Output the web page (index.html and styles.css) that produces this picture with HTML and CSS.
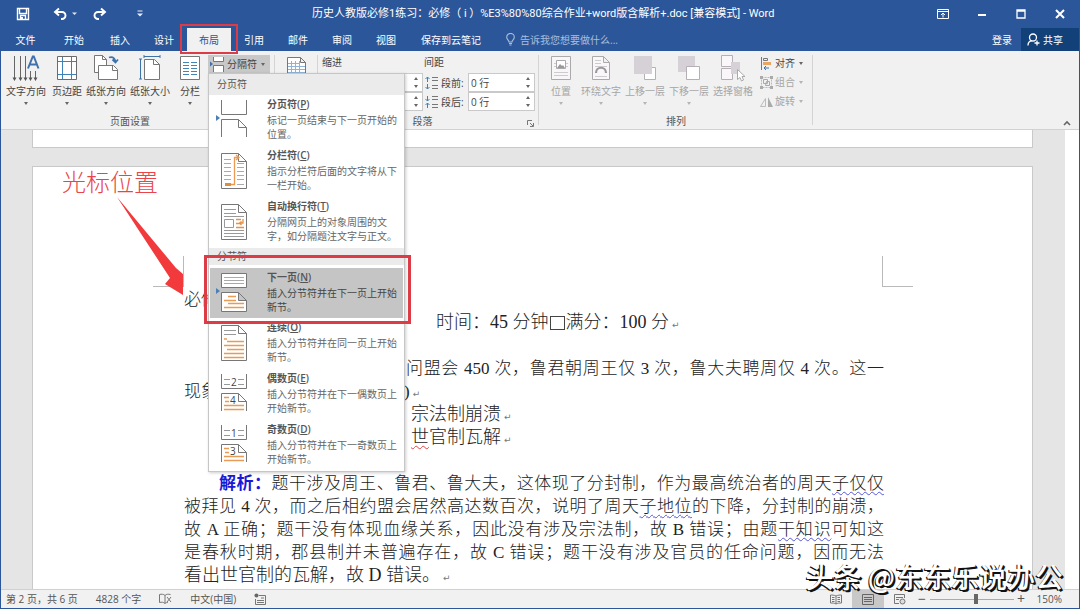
FILE: index.html
```html
<!DOCTYPE html>
<html lang="zh-CN">
<head>
<meta charset="utf-8">
<title>Word</title>
<link rel="stylesheet" href="styles.css">
</head>
<body>
<div class="window">
  <header class="titlebar">
    <div class="quick">
      <button class="qbtn" aria-label="保存"><svg width="14" height="14" viewBox="0 0 14 14"><path d="M1.500 1.500h11v11h-11zM3.500 1.500v5h7v-5M4.500 12.500v-4h5v4" fill="none" stroke="#fff" stroke-width="1.400"/><path d="M5 10h2v2H5z" fill="#fff"/></svg></button>
      <button class="qbtn undo" aria-label="撤消"><svg width="24" height="14" viewBox="0 0 24 14"><path d="M6 1.500 2 5l4 3.500M2.500 5h6.500a3.500 3.500 0 0 1 0 7H8" fill="none" stroke="#fff" stroke-width="1.900"/><path d="M19 5.500h5l-2.500 2.500z" fill="#dfe7f3"/></svg></button>
      <button class="qbtn redo" aria-label="恢复"><svg width="14" height="14" viewBox="0 0 14 14"><path d="M8 1.500 12 5 8 8.500M11.500 5H5a3.500 3.500 0 0 0 0 7h1" fill="none" stroke="#fff" stroke-width="1.900"/></svg></button>
      <button class="qbtn more" aria-label="自定义"><svg width="6" height="8" viewBox="0 0 6 8"><path d="M.500 1h5" stroke="#e8eef7"/><path d="M0 3.500h6L3 6.500z" fill="#e8eef7"/></svg></button>
    </div>
    <div class="doc-title">历史人教版必修1练习：必修（ i ）%E3%80%80综合作业+word版含解析+.doc [兼容模式] - Word</div>
    <div class="controls">
      <button class="ctl" aria-label="功能区显示选项"><svg width="12" height="10" viewBox="0 0 12 10"><path d="M.500.500h11v9H.500zM.500 2.500h11M6 8.500V4.500M4 6l2-2 2 2" fill="none" stroke="#fff"/></svg></button>
      <button class="ctl" aria-label="最小化"><svg width="10" height="10" viewBox="0 0 10 10"><path d="M1 6h8" stroke="#fff" stroke-width="2"/></svg></button>
      <button class="ctl" aria-label="最大化"><svg width="10" height="10" viewBox="0 0 10 10"><path d="M1 1h8v8H1zM1 2h8" fill="none" stroke="#fff" stroke-width="1.300"/></svg></button>
      <button class="ctl" aria-label="关闭"><svg width="10" height="10" viewBox="0 0 10 10"><path d="M1 1l8 8M9 1 1 9" stroke="#fff" stroke-width="2"/></svg></button>
    </div>
  </header>
  <nav class="tabs">
    <button class="tab first">文件</button>
    <button class="tab wide">开始</button>
    <button class="tab">插入</button>
    <button class="tab">设计</button>
    <button class="tab active">布局</button>
    <button class="tab">引用</button>
    <button class="tab">邮件</button>
    <button class="tab">审阅</button>
    <button class="tab">视图</button>
    <button class="tab notes">保存到云笔记</button>
    <label class="tell"><svg width="9" height="13" viewBox="0 0 9 13"><path d="M3 9C3 7 .700 6.500.700 4.200a3.800 3.800 0 0 1 7.600 0C8.300 6.500 6 7 6 9zM3 10.500h3M3.500 12h2" fill="none" stroke="#a9bddd" stroke-width="1.100"/></svg><input type="text" placeholder="告诉我您想要做什么..." aria-label="告诉我您想要做什么"></label>
    <button class="login">登录</button>
    <button class="share"><svg width="13" height="13" viewBox="0 0 13 13"><circle cx="6" cy="4.500" r="3.500" fill="none" stroke="#fff" stroke-width="1.300"/><path d="M1 12.500C1 9.500 3 8 5 7.700M10 7.500v5M7.500 10h5" fill="none" stroke="#fff" stroke-width="1.300"/></svg>共享</button>
    <span class="mark mark-tab"></span>
  </nav>

  <section class="ribbon">
    <div class="group page-setup">
      <div class="tools">
        <button class="tool w48"><svg width="28" height="28" viewBox="0 0 28 28"><path d="M2.500 1v23M8.500 1v23M13.500 1v23M18.500 16v8M23.500 16v8" stroke="#666"/><path d="M.500 22.500l2 3.500 2-3.500zM6.500 22.500l2 3.500 2-3.500zM11.500 22.500l2 3.500 2-3.500zM16.500 22.500l2 3.500 2-3.500zM21.500 22.500l2 3.500 2-3.500z" fill="#555"/><path d="M16 13.500 20.800 1.500h1L26.500 13.500M17.500 9.500h7.500" fill="none" stroke="#3f72ad" stroke-width="2"/></svg>文字方向<i class="caret"></i></button>
        <button class="tool w34"><svg width="20" height="28" viewBox="0 0 20 28"><path d="M.500 1.500h19v23H.500z" fill="#fff" stroke="#6b6b6b"/><path d="M5.500 2v22M14.500 2v22M1 6.500h18M1 19.500h18" stroke="#3d82b8"/></svg>页边距<i class="caret"></i></button>
        <button class="tool w44"><svg width="26" height="28" viewBox="0 0 26 28"><path d="M1.500.500h8l4 4v13h-12z" fill="#fff" stroke="#777"/><path d="M9.500.500v4h4" fill="none" stroke="#777"/><path d="M5.500 10.500h15l4 4v10h-19z" fill="#fff" stroke="#777"/><path d="M19.500 10.500v5h5" fill="none" stroke="#777"/><path d="M16 2.500c4-1.500 6 1 6.500 4.500M19.500 4.500l3 3L25 4.500" fill="none" stroke="#3f72ad" stroke-width="1.800"/></svg>纸张方向<i class="caret"></i></button>
        <button class="tool w44"><svg width="22" height="28" viewBox="0 0 22 28"><path d="M5.500 4.500h10l5 5v15h-15z" fill="#fff" stroke="#777"/><path d="M14.500 4.500v5h6" fill="none" stroke="#777"/><path d="M5 1.500h16M5 0v3M21 0v3M1.500 4v20M0 4h3M0 24h3" stroke="#3d72a8"/></svg>纸张大小<i class="caret"></i></button>
        <button class="tool w36"><svg width="20" height="28" viewBox="0 0 20 28"><path d="M.500 1.500h19v23H.500z" fill="#fff" stroke="#777"/><path d="M3 7.500h6M11 7.500h6M3 10.500h6M11 10.500h6M3 13.500h6M11 13.500h6M3 16.500h6M11 16.500h6M3 19.500h6M11 19.500h6" stroke="#4384b5"/></svg>分栏<i class="caret"></i></button>
      </div>
      <div class="split">
        <button class="breaks" aria-expanded="true"><svg width="15" height="15" viewBox="0 0 15 15"><path d="M3.500 0v4.500h10V0M3.500 15V8.500h10V15" fill="#fff" stroke="#777"/><path d="M0 4.500v5l3-2.500z" fill="#3f72ad"/></svg>分隔符<i class="caret"></i></button>
        <div class="menu" role="menu">
          <h2 class="menu-head">分页符</h2>
          <button class="item" role="menuitem"><svg width="27" height="40" viewBox="0 0 27 40"><path d="M.500 1v14.500h25V1M.500 38V20.500h17l8 8V38M17.500 20.500v8h8" fill="#fff" stroke="#777"/></svg><span class="copy"><b>分页符(<u>P</u>)</b>标记一页结束与下一页开始的位置。</span><i class="pointer"></i></button>
          <button class="item" role="menuitem"><svg width="27" height="40" viewBox="0 0 27 40"><path d="M.500 3.500h17l8 8V38.500H.500zM17.500 3.500v8h8" fill="#fff" stroke="#777"/><path d="M3 9.500h7M3 13.500h7M3 17.500h7M3 21.500h7M3 25.500h7M3 29.500h7M16 13.500h7M16 17.500h7M16 21.500h7M16 25.500h7M16 29.500h7M16 34.500h7" stroke="#aaa"/><path d="M4 34.500h9.500V7.500h4M15 5l3 2.500-3 2.500" fill="none" stroke="#e99a54" stroke-width="1.300"/><path d="M4 33h6v3H4z" fill="#e08c40"/></svg><span class="copy"><b>分栏符(<u>C</u>)</b>指示分栏符后面的文字将从下一栏开始。</span></button>
          <button class="item" role="menuitem"><svg width="27" height="40" viewBox="0 0 27 40"><path d="M.500 3.500h17l8 8V38.500H.500zM17.500 3.500v8h8" fill="#fff" stroke="#777"/><path d="M3 8.500h12M3 12.500h12M3 15.500h20M3 29.500h20M3 32.500h20M3 35.500h20M3.500 18.500h9v8h-9z" fill="none" stroke="#999"/><path d="M15 18.500h5M15 22.500h4M15 26.500h8M22 18v4h-3M20.500 20.500 18.500 22l2 2" fill="none" stroke="#e69148" stroke-width="1.300"/></svg><span class="copy"><b>自动换行符(<u>T</u>)</b>分隔网页上的对象周围的文字，如分隔题注文字与正文。</span></button>
          <h2 class="menu-head low">分节符</h2>
          <button class="item selected" role="menuitem"><svg width="27" height="46" viewBox="0 0 27 46"><path d="M.500 5.500h25v14H.500zM.500 24.500h17l8 8v11H.500zM17.500 24.500v8h8" fill="#fff" stroke="#777"/><path d="M3 9.500h20M3 12.500h20M3 15.500h20" stroke="#aaa"/><path d="M7 28.500h8M3 32.500h12M7 35.500h16M3 39.500h20" stroke="#e99a54" stroke-width="1.300"/></svg><span class="copy"><b>下一页(<u>N</u>)</b>插入分节符并在下一页上开始新节。</span><i class="pointer"></i></button>
          <button class="item" role="menuitem"><svg width="27" height="40" viewBox="0 0 27 40"><path d="M.500 3.500h17l8 8V38.500H.500zM17.500 3.500v8h8" fill="#fff" stroke="#777"/><path d="M3 8.500h12M3 12.500h12" stroke="#999"/><path d="M3 17h3M6 19.500h17M3 23.500h20M6 27.500h17M3 31.500h20M3 35.500h20" stroke="#e99a54" stroke-width="1.300"/></svg><span class="copy"><b>连续(<u>O</u>)</b>插入分节符并在同一页上开始新节。</span></button>
          <button class="item" role="menuitem"><svg width="27" height="40" viewBox="0 0 27 40"><path d="M.500 1v14.500h25V1M.500 38V20.500h17l8 8V38M17.500 20.500v8h8" fill="#fff" stroke="#777"/><path d="M3 6.500h6M17 6.500h6M3 11.500h6M17 11.500h6" stroke="#999"/><path d="M3 24.500h5M4 28.500h4M3 32.500h20M3 36.500h20" stroke="#e99a54" stroke-width="1.300"/><text x="10" y="13" class="num">2</text><text x="9" y="31" class="num">4</text></svg><span class="copy"><b>偶数页(<u>E</u>)</b>插入分节符并在下一偶数页上开始新节。</span></button>
          <button class="item" role="menuitem"><svg width="27" height="40" viewBox="0 0 27 40"><path d="M.500 1v14.500h25V1M.500 38V20.500h17l8 8V38M17.500 20.500v8h8" fill="#fff" stroke="#777"/><path d="M3 6.500h6M17 6.500h6M3 11.500h6M17 11.500h6" stroke="#999"/><path d="M3 24.500h5M4 28.500h4M3 32.500h20M3 36.500h20" stroke="#e99a54" stroke-width="1.300"/><text x="10" y="13" class="num">1</text><text x="9" y="31" class="num">3</text></svg><span class="copy"><b>奇数页(<u>D</u>)</b>插入分节符并在下一奇数页上开始新节。</span></button>
          <span class="mark mark-item"></span>
        </div>
      </div>
      <div class="group-name setup-name">页面设置</div>
    </div>
    <div class="group draft">
      <svg width="20" height="26" viewBox="0 0 20 26"><path d="M.500 2.500h13l5 5v18h-18zM13.500 2.500v5h5" fill="#fff" stroke="#777"/><path d="M1 8.500h12M1 11.500h17M1 14.500h17M1 17.500h17M4.500 6v20M8.500 6v20M12.500 6v20" stroke="#8fb4d6"/></svg>
    </div>
    <div class="group paragraph">
      <div class="spin-grid">
        <span class="cap">缩进</span><span class="cap second">间距</span>
        <div class="spin left"><input type="text" aria-label="左缩进"><i class="ud"></i></div>
        <label class="sp-label" for="before"><svg width="13" height="14" viewBox="0 0 13 14"><path d="M2.500 1v5M.500 3l2-2 2 2M2.500 8v5M.500 11l2 2 2-2" fill="none" stroke="#3d82b8"/><path d="M7 1.500h6M7 4.500h6M7 9.500h6M7 12.500h6" stroke="#777"/></svg>段前:</label>
        <div class="spin"><input id="before" type="text" value="0 行"><i class="ud"></i></div>
        <div class="spin left"><input type="text" aria-label="右缩进"><i class="ud"></i></div>
        <label class="sp-label" for="after"><svg width="13" height="14" viewBox="0 0 13 14"><path d="M2.500 1v5M.500 4l2 2 2-2M2.500 8v5M.500 10l2-2 2 2" fill="none" stroke="#3d82b8"/><path d="M7 1.500h6M7 4.500h6M7 9.500h6M7 12.500h6" stroke="#777"/></svg>段后:</label>
        <div class="spin"><input id="after" type="text" value="0 行"><i class="ud"></i></div>
      </div>
      <div class="group-name shift">段落</div>
      <button class="launcher" aria-label="段落设置"><svg width="7" height="7" viewBox="0 0 7 7"><path d="M.500 5V.500H5M3 3l3 3M6.500 3v3.500H3" fill="none" stroke="#777"/></svg></button>
    </div>
    <div class="group arrange">
      <div class="tools dim">
        <button class="tool w36" disabled><svg width="20" height="28" viewBox="0 0 20 28"><path d="M.500 1.500h19v23H.500z" fill="#f8f6f8" stroke="#aaa"/><path d="M5.500 5.500h9v8h-9z" fill="#fff" stroke="#aaa"/><path d="M6 13l3-4 2 2 1-1 2 3z" fill="#999"/><path d="M3 17.500h14M3 20.500h14M3 8.500h2M15 8.500h2M3 11.500h2M15 11.500h2" stroke="#ccc"/></svg>位置<i class="caret"></i></button>
        <button class="tool w44" disabled><svg width="20" height="28" viewBox="0 0 20 28"><path d="M1.500 1.500h11l6 6v17h-17zM12.500 1.500v6h6" fill="#faf7fa" stroke="#aaa"/><path d="M4 5.500h6M4 8.500h6M4 21.500h12M4 11.500h12" stroke="#ccc"/><path d="M5 18c0-7 10-7 10 0" fill="none" stroke="#999" stroke-width="2.200"/></svg>环绕文字<i class="caret"></i></button>
        <button class="tool w44" disabled><svg width="24" height="28" viewBox="0 0 24 28"><path d="M11.500 12.500h11v12h-11z" fill="#fff" stroke="#b6afb6"/><path d="M1 1h18v18H1z" fill="#d6d1d6"/></svg>上移一层<i class="caret"></i></button>
        <button class="tool w44" disabled><svg width="24" height="28" viewBox="0 0 24 28"><path d="M1 1h17v16H1z" fill="#d6d1d6"/><path d="M9.500 11.500h13v13h-13z" fill="#fff" stroke="#b6afb6"/></svg>下移一层<i class="caret"></i></button>
        <button class="tool w44" disabled><svg width="26" height="28" viewBox="0 0 26 28"><path d="M1.500.500h11v11h-11zM1.500 13.500h11v11h-11z" fill="#faf7fa" stroke="#b6afb6"/><path d="M11 7h9v12h-9z" fill="#d6d1d6"/><path d="M17.500 14.500v10l2.500-2 1.500 3.500 2-1-1.500-3.500h3z" fill="#fff" stroke="#aaa"/></svg>选择窗格</button>
      </div>
      <div class="stack">
        <button><svg width="13" height="13" viewBox="0 0 13 13"><path d="M1.500 0v13M3.500 1.500h4v2h-4z" fill="none" stroke="#777"/><path d="M3 5h8v3H3z" fill="#e8a563"/><path d="M9 11H4M6 9l-2 2 2 2" fill="none" stroke="#3d72a8"/></svg>对齐<i class="caret"></i></button>
        <button disabled><svg width="13" height="13" viewBox="0 0 13 13"><path d="M1.500 1.500h10v10h-10z" fill="none" stroke="#bbb" stroke-dasharray="2 1"/><path d="M0 0h3v3H0zM10 0h3v3h-3zM0 10h3v3H0zM10 10h3v3h-3z" fill="#aaa"/><path d="M3.500 3.500h4v4h-4zM6.500 5.500h3v4h-4z" fill="none" stroke="#aaa"/></svg>组合<i class="caret"></i></button>
        <button disabled><svg width="13" height="13" viewBox="0 0 13 13"><path d="M.500 11.500h5v-8z" fill="none" stroke="#bbb"/><path d="M8 2v10h5z" fill="#aaa"/></svg>旋转<i class="caret"></i></button>
      </div>
      <div class="group-name">排列</div>
    </div>
    <button class="collapse" aria-label="折叠功能区"><svg width="8" height="6" viewBox="0 0 8 6"><path d="M1 5l3-3 3 3" fill="none" stroke="#666" stroke-width="1.600"/></svg></button>
  </section>

  <main class="canvas">
    <div class="pages">
      <div class="sheet previous"></div>
      <article class="sheet current">
        <i class="corner tl"></i><i class="corner tr"></i>
        <p class="line">必修</p>
        <p class="line loose from-time">时间：45 分钟<i class="box"></i>满分：100 分<span class="ret">↵</span></p>
        <p class="line gap"></p>
        <p class="line from-menu full">问盟会 450 次，鲁君朝周王仅 3 次，鲁大夫聘周仅 4 次。这一</p>
        <p class="line two"><span>现象</span><span class="tail">)<span class="ret">↵</span></span></p>
        <p class="line loose from-option">宗法制崩溃<span class="ret">↵</span></p>
        <p class="line loose from-option"><span class="wavy-red">世</span>官制瓦解<span class="ret">↵</span></p>
        <p class="line gap"></p>
        <p class="line full indent"><b class="blue">解析：</b>题干涉及周王、鲁君、鲁大夫，这体现了分封制，作为最高统治者的周天<span class="wavy">子仅仅</span></p>
        <p class="line full">被拜见 4 次，而之后相约盟会居然高达数百次，说明了周天<span class="wavy">子地位</span>的下降，分封制的崩溃，</p>
        <p class="line full">故 A 正确；题干没有体现血缘关系，因此没有涉及宗法制，故 B 错误；由题<span class="wavy">干知识</span>可知这</p>
        <p class="line full">是春秋时期，郡县制并未普遍存在，故 C 错误；题干没有涉及官员的任命问题，因而无法</p>
        <p class="line loose">看出世官制的瓦解，故 D 错误。<span class="ret">↵</span></p>
        <p class="note">光标位置</p>
        <svg class="arrow" width="68" height="100" viewBox="0 0 68 100"><path d="M0 0 59 71 66 77 66 98 48 87 53 81z" fill="#f23a3c"/></svg>
      </article>
    </div>
    <div class="scroll"></div>
    <div class="watermark">头条 @东东乐说办公</div>
  </main>

  <footer class="status">
    <span>第 2 页，共 6 页</span>
    <span>4828 个字</span>
    <svg width="13" height="12" viewBox="0 0 13 12"><path d="M6 2.500C4.500 1 2.500 1 .500 1.500v8c2-.500 4-.500 5.500 1zM6 2.500C7.500 1 9 1 11.500 1.500M6 10.500c1-1 2-1 3-1M8 4l4 5M12 4 8 9" fill="none" stroke="#777"/></svg>
    <span>中文(中国)</span>
    <svg width="12" height="12" viewBox="0 0 12 12"><path d="M5 2.500h6.500v9H1.500V6M3 7.500h7M3 9.500h7M7 5h3" fill="none" stroke="#777"/><circle cx="2.500" cy="2.500" r="2" fill="#666"/></svg>
    <div class="views">
      <button aria-label="阅读视图"><svg width="12" height="11" viewBox="0 0 12 11"><path d="M6 2C4 1 2 1 .500 1v8c2 0 4 0 5.500 1 1.500-1 3.500-1 5.500-1V1C10 1 8 1 6 2zM6 2v8M2 3.500h2.500M2 5.500h2.500M2 7.500h2.500M7.500 3.500H10M7.500 5.500H10M7.500 7.500H10" fill="none" stroke="#777"/></svg></button>
      <button class="on" aria-label="页面视图"><svg width="12" height="11" viewBox="0 0 12 11"><path d="M.500.500h11v10H.500zM2 3.500h8M2 5.500h8M2 7.500h8" fill="none" stroke="#666"/></svg></button>
      <button aria-label="Web 版式视图"><svg width="12" height="11" viewBox="0 0 12 11"><path d="M5 9.500H.500v-9h10V4M2 3.500h7M2 5.500h3" fill="none" stroke="#777"/><circle cx="8.500" cy="7.500" r="2.500" fill="#ddd" stroke="#777"/></svg></button>
    </div>
    <div class="zoom"><button aria-label="缩小">−</button><input type="range" min="0" max="100" value="56" aria-label="显示比例"><button aria-label="放大">+</button><span>150%</span></div>
  </footer>
</div>
</body>
</html>
```
FILE: styles.css
```css
* { box-sizing: border-box; }
body { margin: 0; font: 10px/14px "Open Sans", "Noto Sans CJK SC", sans-serif; color: #444; }
button { font: inherit; color: inherit; background: none; border: 0; padding: 0; margin: 0; }
input { font: inherit; color: inherit; margin: 0; padding: 0; }
p, h2 { margin: 0; }
svg { display: block; flex: none; }

.window { height: 100vh; display: flex; flex-direction: column; border: 1px solid #2b579a; border-top: 0; overflow: hidden; }

/* title bar */
.titlebar { display: flex; align-items: center; height: 28px; background: #2b579a; color: #fff; }
.quick { display: flex; align-items: center; width: 311px; padding-left: 15px; }
.undo { margin-left: 23px; }
.redo { margin-left: 16px; }
.more { margin-left: 30px; }
.doc-title { flex: 1; font-family: Roboto, "Noto Sans CJK SC", sans-serif; font-size: 11px; white-space: nowrap; }
.controls { display: flex; }
.ctl { width: 39px; display: flex; justify-content: center; }

/* tabs */
.tabs { position: relative; display: flex; height: 23px; background: #2b579a; color: #fff; }
.tab { width: 44px; white-space: nowrap; }
.tab.first { width: 49px; }
.tab.wide { width: 48px; }
.tab.active { background: #f1f1f1; color: #2b579a; margin: 0 1px; }
.tab.notes { width: 86px; }
.tell { display: flex; align-items: center; gap: 5px; flex: 1; padding-left: 12px; }
.tell input { width: 160px; border: 0; background: none; }
.tell input::placeholder { color: #a9bddd; opacity: 1; }
.login { width: 38px; }
.share { display: flex; align-items: center; justify-content: center; gap: 3px; width: 58px; padding-right: 10px; background: #124078; }
.mark { position: absolute; border: 2px solid #dc3c45; pointer-events: none; }
.mark-tab { left: 179px; top: -4px; width: 58px; height: 30px; z-index: 6; }

/* ribbon */
.ribbon { position: relative; z-index: 5; display: flex; height: 79px; background: #f1f1f1; border-bottom: 1px solid #d2d2d2; }
.group { position: relative; display: flex; align-items: flex-start; padding-top: 4px; }
.group::after { content: ""; position: absolute; right: 0; top: 4px; bottom: 4px; border-right: 1px solid #d4d4d4; }
.group-name { position: absolute; left: 0; right: 0; bottom: 1px; text-align: center; color: #555; }
.setup-name { right: 16px; }
.page-setup { width: 274px; z-index: 2; }
.tools { display: flex; padding-left: 1px; }
.tool { display: flex; flex-direction: column; align-items: center; white-space: nowrap; }
.tool svg { margin-bottom: 1px; }
.w34 { width: 34px; }
.w36 { width: 36px; }
.w44 { width: 44px; }
.w48 { width: 48px; }
.caret { display: block; border: 2px solid transparent; border-top: 3px solid #666; border-bottom: 0; }
.tool .caret { margin-top: 4px; }
.split { position: relative; z-index: 1; }
.breaks { display: flex; align-items: center; gap: 2px; width: 62px; height: 18px; padding-left: 2px; background: #c8c8c8; white-space: nowrap; }
.breaks .caret { margin-left: 2px; }
.draft { width: 43px; padding-left: 12px; }
.paragraph { width: 221px; padding-left: 4px; }
.spin-grid { display: grid; grid-template-columns: 101px 45px 67px; grid-template-rows: 18px 19px 19px; align-items: center; }
.cap { line-height: 14px; align-self: start; }
.cap.second { grid-column: 2 / 4; padding-left: 1px; }
.spin { display: flex; align-items: center; height: 19px; background: #fff; border: 1px solid #c9c9c9; }
.spin input { flex: 1; min-width: 0; border: 0; background: none; padding-left: 2px; }
.ud { display: flex; flex-direction: column; justify-content: space-between; height: 11px; margin-right: 4px; }
.ud::before, .ud::after { content: ""; border: 2px solid transparent; }
.ud::before { border-top: 0; border-bottom: 3px solid #666; }
.ud::after { border-bottom: 0; border-top: 3px solid #666; }
.sp-label { display: flex; align-items: center; gap: 3px; padding-left: 2px; white-space: nowrap; }
.group-name.shift { right: 12px; }
.launcher { position: absolute; right: 5px; bottom: 2px; }
.arrange { width: 274px; padding-left: 3px; }
.dim, .stack button:disabled { color: #a6a6a6; }
.dim .caret, .stack button:disabled .caret { border-top-color: #b5b5b5; }
.stack { display: flex; flex-direction: column; gap: 5px; padding: 1px 0 0 5px; }
.stack button { display: flex; align-items: center; gap: 2px; white-space: nowrap; }
.stack .caret { margin-left: 2px; }
.collapse { position: absolute; right: 8px; bottom: 3px; }

/* breaks menu */
.menu { position: absolute; left: 0; top: 18px; width: 197px; background: #fff; border: 1px solid #c6c6c6; box-shadow: 1px 1px 3px rgba(0, 0, 0, .2); }
.menu-head { padding-left: 8px; font-size: 10px; line-height: 21px; font-weight: 400; background: #ebebeb; color: #555; }
.menu-head.low { line-height: 17px; margin-bottom: 3px; }
.item { position: relative; display: flex; width: 193px; height: 51px; margin: 0 1px; padding-left: 11px; text-align: left; align-items: flex-start; color: #666; }
.item.selected { height: 50px; background: #c5c5c5; color: #444; }
.copy { width: 134px; margin-left: 19px; line-height: 14px; }
.copy b { display: block; line-height: 18px; font-weight: 600; color: #555; }
.item svg { margin-top: 4px; }
.item.selected svg { margin-top: 0; }
.pointer { position: absolute; left: 6px; top: 20px; border: 3px solid transparent; border-left: 4px solid #4a80b5; border-right: 0; }
.num { font-size: 10px; fill: #444; }
.mark-item { left: -5px; top: 181px; width: 207px; height: 69px; border-width: 3px; }

/* document */
.canvas { position: relative; flex: 1; min-height: 0; display: flex; background: #e5e5e5; }
.pages { flex: 1; min-width: 0; padding: 0 32px 0 31px; display: flex; flex-direction: column; overflow: hidden; }
.sheet { flex: none; background: #fff; border: 1px solid #c9c9c9; }
.previous { height: 18px; border-top: 0; margin-bottom: 18px; }
.current { position: relative; padding: 121px 148px 40px 151px; border-bottom: 0; font: 17px/23px "Liberation Serif", "Noto Sans CJK SC", serif; font-weight: 300; color: #222; }
.line { height: 23px; white-space: nowrap; }
.full { text-align: justify; text-align-last: justify; }
.loose { font-size: 18px; }
.from-time { padding-left: 252px; }
.from-menu { padding-left: 222px; }
.from-option { padding-left: 227px; }
.indent { padding-left: 35px; }
.two { display: flex; }
.tail { margin-left: 186px; }
.box { display: inline-block; width: 15px; height: 14px; margin: 0 1px; border: 1px solid #444; vertical-align: -2px; }
.ret { font: 9px/10px "DejaVu Sans", sans-serif; color: #777; padding-left: 3px; }
.blue { color: #1a1ad6; font-weight: 700; }
.wavy { text-decoration: underline wavy #5656dd 1px; text-underline-offset: 2px; }
.wavy-red { text-decoration: underline wavy #e04444 1px; text-underline-offset: 2px; }
.corner { position: absolute; top: 89px; width: 31px; height: 31px; border: 0 solid #b9b9b9; border-bottom-width: 1px; }
.corner.tl { left: 120px; border-right-width: 1px; }
.corner.tr { right: 119px; border-left-width: 1px; }
.note { position: absolute; left: 29px; top: 0; font-size: 24px; line-height: 32px; color: #ea4448; }
.arrow { position: absolute; left: 84px; top: 30px; }
.scroll { width: 14px; background: #fff; }
.watermark { position: absolute; right: 16px; bottom: -2px; font: 500 28px/30px "Noto Sans CJK SC", sans-serif; color: #fff; text-shadow: -1px 1px 0 #111, 1px 1px 0 #111, 2px 2px 0 #111; white-space: nowrap; z-index: 7; }

/* status bar */
.status { display: flex; align-items: center; gap: 18px; height: 19px; padding: 0 17px 0 5px; background: #f1f1f1; border-top: 1px solid #d0d0d0; white-space: nowrap; color: #555; }
.views { display: flex; align-self: stretch; margin-left: auto; }
.views button { width: 32px; display: flex; align-items: center; justify-content: center; }
.views .on { background: #c8c8c8; }
.zoom { display: flex; align-items: center; gap: 3px; margin-left: -16px; }
.zoom button { width: 9px; font-size: 14px; }
.zoom span { padding-left: 8px; }
.zoom input { appearance: none; width: 84px; height: 12px; background: linear-gradient(#aaa, #aaa) 0 6px / 100% 1px no-repeat; }
.zoom input::-webkit-slider-thumb { appearance: none; width: 4px; height: 10px; background: #666; }
```
